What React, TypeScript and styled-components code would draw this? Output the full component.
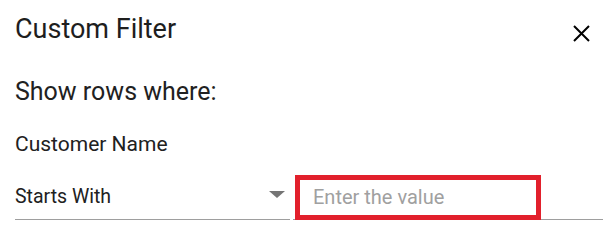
import React from 'react';
import styled, { createGlobalStyle } from 'styled-components';

const GlobalStyle = createGlobalStyle`
    body {
        margin: 0;
        background: #fff;
        font-family: Roboto, "Noto Sans", sans-serif;
        color: #212121;
    }
`

const App = () => {
    return (
    <>
    <GlobalStyle/>
    <Dialog>
        <Header>
            <Title>Custom Filter</Title>
            <CloseButton aria-label="close">
                <svg width="17" height="17" viewBox="0 0 17 17">
                    <path d="M1 1 L16 16 M16 1 L1 16" stroke="#000" strokeWidth="2" />
                </svg>
            </CloseButton>
        </Header>
        <Subtitle>Show rows where:</Subtitle>
        <FieldLabel>Customer Name</FieldLabel>
        <Row>
            <Select>
                <span>Starts With</span>
                <Arrow/>
            </Select>
            <InputWrap>
                <ValueInput placeholder="Enter the value" />
                <Highlight/>
            </InputWrap>
        </Row>
    </Dialog>
    </>
    );
};

export default App;

const Dialog = styled.div`
    width: 609px;
    height: 237px;
    box-sizing: border-box;
    padding: 13px 6px 0 15px;
`

const Header = styled.div`
    display: flex;
    justify-content: space-between;
    align-items: center;
    padding-right: 13px;
    height: 32px;
`

const Title = styled.div`
    font-size: 27px;
    line-height: 32px;
    color: #1e1e1e;
`

const CloseButton = styled.button`
    border: none;
    background: none;
    padding: 0;
    margin-top: 8px;
    width: 17px;
    height: 17px;
    display: flex;
    cursor: pointer;
`

const Subtitle = styled.div`
    margin-top: 32px;
    font-size: 25px;
    line-height: 30px;
    color: #212121;
`

const FieldLabel = styled.div`
    margin-top: 25px;
    font-size: 21px;
    line-height: 24px;
    color: #212121;
`

const Row = styled.div`
    margin-top: 19px;
    display: flex;
    gap: 3px;
`

const Select = styled.div`
    width: 275px;
    height: 45px;
    box-sizing: border-box;
    border-bottom: 1px solid #9e9e9e;
    display: flex;
    align-items: center;
    justify-content: space-between;
    padding: 0 5px 1px 0;
    font-size: 19.5px;
    line-height: 24px;
    color: #212121;
`

const Arrow = styled.div`
    width: 0;
    height: 0;
    border-left: 8px solid transparent;
    border-right: 8px solid transparent;
    border-top: 7px solid #757575;
    margin-top: -5px;
`

const InputWrap = styled.div`
    position: relative;
    width: 310px;
    height: 45px;
    box-sizing: border-box;
    border-bottom: 1px solid #9e9e9e;
`

const ValueInput = styled.input`
    width: 100%;
    height: 100%;
    box-sizing: border-box;
    border: none;
    outline: none;
    padding: 0 0 1px 20px;
    font-family: Roboto, sans-serif;
    font-size: 20px;
    background: transparent;
    color: #212121;
    &::placeholder {
        color: #a0a0a0;
    }
`

const Highlight = styled.div`
    position: absolute;
    left: 2px;
    top: 0;
    width: 246px;
    height: 45px;
    box-sizing: border-box;
    border: 5px solid #e2202c;
    pointer-events: none;
`
